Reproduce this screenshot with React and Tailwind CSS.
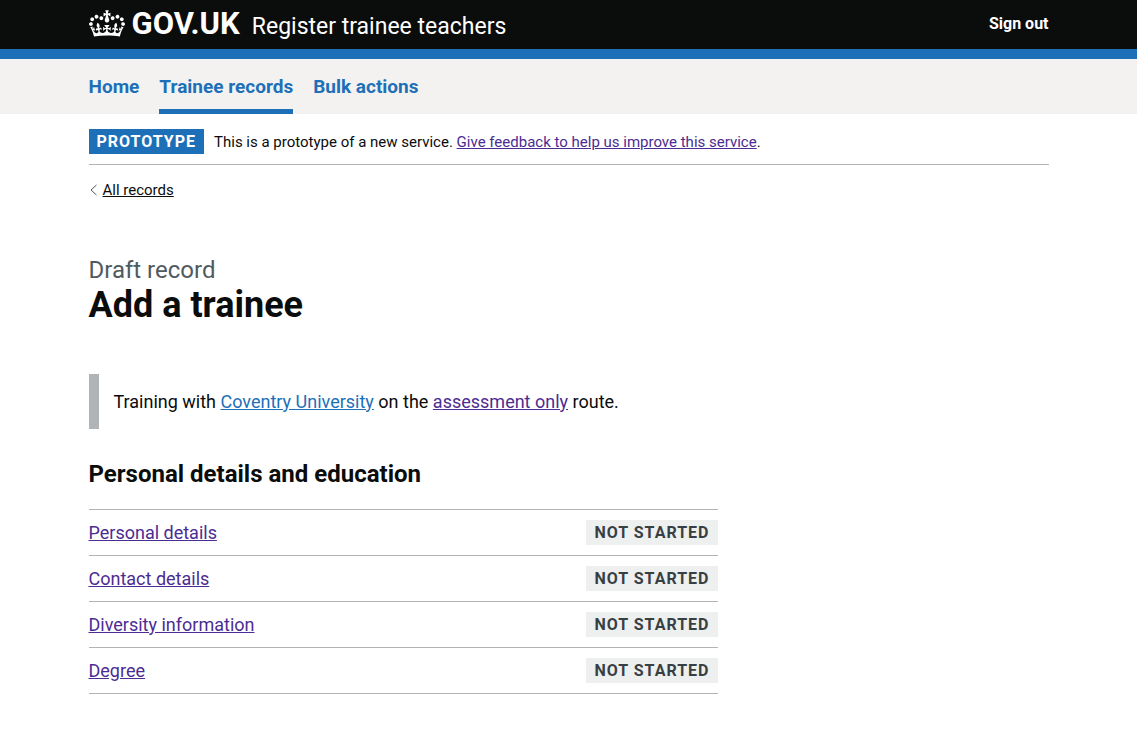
const CROWN =
  "M25 30.2c3.5 1.5 7.7-.2 9.1-3.7 1.5-3.6-.2-7.8-3.9-9.2-3.6-1.4-7.6.3-9.1 3.9-1.4 3.5.3 7.5 3.9 9zM9 39.5c3.6 1.5 7.8-.2 9.2-3.7 1.5-3.6-.2-7.8-3.9-9.1-3.6-1.5-7.6.2-9.1 3.8-1.4 3.5.3 7.5 3.8 9zM4.4 57.2c3.5 1.5 7.7-.2 9.1-3.8 1.5-3.6-.2-7.7-3.9-9.1-3.5-1.5-7.6.3-9.1 3.8-1.4 3.5.3 7.6 3.9 9.1zm38.3-21.4c3.5 1.5 7.7-.2 9.1-3.8 1.5-3.6-.2-7.7-3.9-9.1-3.6-1.5-7.6.3-9.1 3.8-1.3 3.6.4 7.7 3.9 9.1zm64.4-5.6c-3.6 1.5-7.8-.2-9.1-3.7-1.5-3.6.2-7.8 3.8-9.2 3.6-1.4 7.7.3 9.2 3.9 1.3 3.5-.4 7.5-3.9 9zm15.9 9.3c-3.6 1.5-7.7-.2-9.1-3.7-1.5-3.6.2-7.8 3.7-9.1 3.6-1.5 7.7.2 9.2 3.8 1.5 3.5-.3 7.5-3.8 9zm4.7 17.7c-3.6 1.5-7.8-.2-9.2-3.8-1.5-3.6.2-7.7 3.9-9.1 3.6-1.5 7.7.3 9.2 3.8 1.3 3.5-.4 7.6-3.9 9.1zM89.3 35.8c-3.6 1.5-7.8-.2-9.2-3.8-1.4-3.6.2-7.7 3.9-9.1 3.6-1.5 7.7.3 9.2 3.8 1.4 3.6-.3 7.7-3.9 9.1zM69.7 17.7l8.9 4.7V9.3l-8.9 2.8c-.2-.3-.5-.6-.9-.9L72.4 0H59.6l3.5 11.2c-.3.3-.6.5-.9.9l-8.8-2.8v13.1l8.8-4.7c.3.3.6.7.9.9l-5 15.4v.1c-.2.8-.4 1.6-.4 2.4 0 4.1 3.1 7.5 7 8.1h.2c.3 0 .7.1 1 .1.4 0 .7 0 1-.1h.2c4-.6 7.1-4.1 7.1-8.1 0-.8-.1-1.7-.4-2.4V34l-5.1-15.4c.4-.2.7-.6 1-.9zM66 92.8c16.9 0 32.8 1.1 47.1 3.2 4-16.9 8.9-26.7 14-33.5l-9.6-3.4c1 4.9 1.1 7.2 0 10.2-1.5-1.4-3-4.3-4.2-8.7L108.6 76c2.8-2 5-3.2 7.5-3.3-4.4 9.4-10 11.9-13.6 11.2-4.3-.8-6.3-4.6-5.6-7.9 1-4.7 5.7-5.9 8-.5 4.3-8.7-3-11.4-7.6-8.8 7.1-7.2 7.9-13.5 2.1-21.1-8 6.1-8.1 12.3-4.5 20.8-4.7-5.4-12.1-2.5-9.5 6.2 3.4-5.2 7.9-2 7.2 3.1-.6 4.3-6.4 7.8-13.5 7.2-10.3-.9-10.9-8-11.2-13.8 2.5-.5 7.1 1.8 11 7.3L80.2 60c-4.1 4.4-8 5.3-12.3 5.4 1.4-4.4 8-11.6 8-11.6H55.5s6.4 7.2 7.9 11.6c-4.2-.1-8-1-12.3-5.4l1.4 16.4c3.9-5.5 8.5-7.7 10.9-7.3-.3 5.8-.9 12.8-11.1 13.8-7.2.6-12.9-2.9-13.5-7.2-.7-5 3.8-8.3 7.1-3.1 2.7-8.7-4.6-11.6-9.4-6.2 3.7-8.5 3.6-14.7-4.6-20.8-5.8 7.6-5 13.9 2.2 21.1-4.7-2.6-11.9.1-7.7 8.8 2.3-5.5 7.1-4.2 8.1.5.7 3.3-1.3 7.1-5.7 7.9-3.5.7-9-1.8-13.5-11.2 2.5.1 4.7 1.3 7.5 3.3l-4.7-15.4c-1.2 4.4-2.7 7.2-4.3 8.7-1.1-3-.9-5.3 0-10.2l-9.5 3.4c5 6.9 9.9 16.7 14 33.5 14.8-2.1 30.8-3.2 47.7-3.2z";

const NAV = [
  { label: "Home", current: false },
  { label: "Trainee records", current: true },
  { label: "Bulk actions", current: false },
];

const TASKS = ["Personal details", "Contact details", "Diversity information", "Degree"];

function Container({ className = "", children }) {
  return <div className={`mx-auto w-full max-w-[960px] ${className}`}>{children}</div>;
}

function Header() {
  return (
    <header className="border-b-10 border-[#1d70b8] bg-[#0b0c0c] text-white">
      <Container className="flex h-[49px] items-center justify-between pb-[2px]">
        <div className="flex items-center gap-3">
          <a href="#" className="flex items-center gap-[7px] text-[31px] leading-[30px] font-bold">
            <svg aria-hidden="true" viewBox="0 0 132 97" className="h-[27px] w-9" fill="currentColor">
              <path fillRule="evenodd" d={CROWN} />
            </svg>
            GOV.UK
          </a>
          <a href="#" className="pt-[6px] text-[23px] leading-[30px]">Register trainee teachers</a>
        </div>
        <a href="#" className="text-base leading-5 font-bold">Sign out</a>
      </Container>
    </header>
  );
}

function Navigation() {
  return (
    <nav aria-label="Primary" className="bg-[#f3f2f1]">
      <Container>
        <ul className="flex gap-5">
          {NAV.map((item) => (
            <li key={item.label}>
              <a
                href="#"
                aria-current={item.current ? "page" : undefined}
                className={`flex h-[55px] items-center border-b-5 pt-[7px] text-[19px] font-bold text-[#1d70b8] ${
                  item.current ? "border-[#1d70b8]" : "border-transparent"
                }`}
              >
                {item.label}
              </a>
            </li>
          ))}
        </ul>
      </Container>
    </nav>
  );
}

export default function App() {
  return (
    <div className="bg-white font-[Roboto,'Liberation_Sans',sans-serif] text-[#0b0c0c]">
      <Header />
      <Navigation />
      <Container>
        <div className="flex items-center border-b border-[#b1b4b6] pt-[15px] pb-[10px]">
          <strong className="mr-[10px] bg-[#1d70b8] px-2 text-base leading-[25px] font-bold tracking-[1px] text-white">
            PROTOTYPE
          </strong>
          <p className="text-[15px] leading-5">
            This is a prototype of a new service.{" "}
            <a href="#" className="text-[#4c2c92] underline">Give feedback to help us improve this service</a>.
          </p>
        </div>
        <div className="mt-[15px] flex">
          <a href="#" className="flex items-center gap-[5px] text-[15px] leading-5">
            <svg aria-hidden="true" viewBox="0 0 9 12" className="h-3 w-[9px]" fill="none" stroke="#505a5f">
              <path d="M7.500 1 2 6l5.500 5" />
            </svg>
            <span className="underline">All records</span>
          </a>
        </div>
        <main className="pt-[55px] pb-[50px]">
          <div className="w-full max-w-[629px]">
            <span className="block text-2xl leading-[30px] text-[#505a5f]">Draft record</span>
            <h1 className="text-4xl leading-10 font-bold">Add a trainee</h1>
            <p className="mt-[49px] border-l-10 border-[#b1b4b6] p-[15px] text-[18px] leading-[25px]">
              Training with <a href="#" className="text-[#1d70b8] underline">Coventry University</a> on the{" "}
              <a href="#" className="text-[#4c2c92] underline">assessment only</a> route.
            </p>
            <h2 className="mt-[30px] text-2xl leading-[30px] font-bold">Personal details and education</h2>
            <ul className="mt-5 border-t border-[#b1b4b6]">
              {TASKS.map((task) => (
                <li key={task} className="flex items-center justify-between border-b border-[#b1b4b6] py-[10px]">
                  <a href="#" className="text-[18px] leading-[25px] text-[#4c2c92] underline">{task}</a>
                  <strong className="bg-[#eeefef] px-2 text-base leading-[25px] font-bold tracking-[1px] text-[#383f43]">
                    NOT STARTED
                  </strong>
                </li>
              ))}
            </ul>
          </div>
        </main>
      </Container>
    </div>
  );
}
